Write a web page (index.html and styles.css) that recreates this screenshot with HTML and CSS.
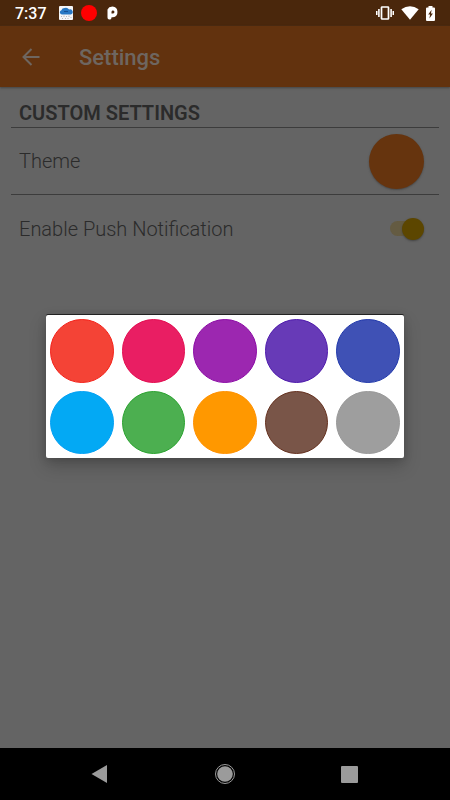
FILE: index.html
```html
<!DOCTYPE html>
<html lang="en">
<head>
<meta charset="utf-8">
<meta name="viewport" content="width=device-width, initial-scale=1">
<title>Settings</title>
<link rel="stylesheet" href="styles.css">
</head>
<body>
<div class="status">
  <span class="time">7:37</span>
  <svg class="weather" width="14" height="14" viewBox="0 0 14 14" aria-hidden="true">
    <rect width="14" height="14" rx="1" fill="#f5f6f8"/>
    <path d="M3 8.500a2.200 2.200 0 0 1-.6-4.300A3.300 3.300 0 0 1 5.500 2a4 4 0 0 1 4.600 1.500A2.600 2.600 0 0 1 12 8.500z" fill="#2878c4"/>
    <path d="M5 5.500h4" stroke="#154f94"/>
    <path d="M2.500 10v1M5 9.500v1.500M7.500 10v1M10 9.500v1.500M3.500 12v1M6.500 12v1M9 12v1M12 11v1" stroke="#aaa" stroke-width=".8"/>
  </svg>
  <span class="record"></span>
  <svg class="plogo" width="12" height="14" viewBox="0 0 12 14" aria-hidden="true">
    <path d="M.5 11.500V3.500L2.300 1.200 5.500.5a5.400 5.400 0 0 1 .5 10.700H4.500v.5a2 2 0 0 1-4-.2z" fill="#fff"/>
    <path d="M4.500 7.500V5.700a1.500 1.500 0 1 1 1.600 1.800z" fill="#4a270c"/>
  </svg>
  <span class="spacer"></span>
  <svg class="vibrate" width="18" height="14" viewBox="0 0 18 14" aria-hidden="true">
    <path d="M.7 5v4M2.900 3v8M15.100 3v8M17.300 5v4" stroke="#fff" stroke-width="1.600"/>
    <rect x="5.500" y="1" width="7" height="12" rx=".6" fill="none" stroke="#fff" stroke-width="1.700"/>
  </svg>
  <svg class="wifi" width="18" height="14" viewBox="0 0 18 14" aria-hidden="true">
    <path d="M.3 3.200Q9-2.600 17.700 3.200L9 13.700z" fill="#fff"/>
  </svg>
  <svg class="battery" width="9" height="15" viewBox="0 0 9 15" aria-hidden="true">
    <path d="M2.500 0h4v1.500H8q1 0 1 1V14q0 1-1 1H1q-1 0-1-1V2.500q0-1 1-1h1.500z" fill="#fff"/>
    <path d="M5.600 3.800L2.200 8.600h1.900L3.400 12.500 6.900 7.400H5z" fill="#4a270c"/>
  </svg>
</div>
<div class="app">
  <header class="bar">
    <button class="back" aria-label="Back">
      <svg width="18" height="18" viewBox="0 0 18 18" aria-hidden="true"><path d="M17.500 9H1.500M9.500 1L1.500 9l8 8" fill="none" stroke="#6e6660" stroke-width="2"/></svg>
    </button>
    <h1>Settings</h1>
  </header>
  <main class="settings">
    <h2>CUSTOM SETTINGS</h2>
    <div class="row">
      <span>Theme</span>
      <button class="theme" aria-label="Theme color"></button>
    </div>
    <div class="row">
      <label for="push">Enable Push Notification</label>
      <input class="switch" id="push" type="checkbox" role="switch" checked>
    </div>
  </main>
</div>
<div class="overlay">
  <div class="dialog" role="dialog" aria-label="Theme colors">
    <button class="swatch red" aria-label="Red"></button>
    <button class="swatch pink" aria-label="Pink"></button>
    <button class="swatch purple" aria-label="Purple"></button>
    <button class="swatch violet" aria-label="Deep purple"></button>
    <button class="swatch indigo" aria-label="Indigo"></button>
    <button class="swatch blue" aria-label="Light blue"></button>
    <button class="swatch green" aria-label="Green"></button>
    <button class="swatch orange" aria-label="Orange"></button>
    <button class="swatch brown" aria-label="Brown"></button>
    <button class="swatch gray" aria-label="Gray"></button>
  </div>
</div>
<nav class="nav">
  <button aria-label="Back"><svg width="22" height="22" viewBox="0 0 22 22" aria-hidden="true"><path d="M2.500 11L18 2v18z" fill="#9b9b9b"/></svg></button>
  <button aria-label="Home"><svg width="22" height="22" viewBox="0 0 22 22" aria-hidden="true"><circle cx="11" cy="11" r="9.500" fill="none" stroke="#9b9b9b"/><circle cx="11" cy="11" r="7.800" fill="#9b9b9b"/></svg></button>
  <button aria-label="Recent apps"><svg width="22" height="22" viewBox="0 0 22 22" aria-hidden="true"><rect x="3" y="3" width="17" height="17" rx="1" fill="#9b9b9b"/></svg></button>
</nav>
</body>
</html>
```
FILE: styles.css
```css
* { box-sizing: border-box; }

body {
  margin: 0;
  min-height: 100vh;
  display: flex;
  flex-direction: column;
  background: #646464;
  color: #2b2b2b;
  font-family: Roboto, "Liberation Sans", sans-serif;
  font-size: 20px;
}

button {
  padding: 0;
  border: 0;
  background: none;
}

svg { display: block; }

.status {
  height: 26px;
  display: flex;
  align-items: center;
  padding: 0 15px;
  background: #4a270c;
  color: #fff;
}
.time { font-size: 16px; font-weight: 500; line-height: 20px; padding-top: 2px; }
.weather { margin-left: 12px; }
.record {
  width: 16px;
  height: 16px;
  margin-left: 8px;
  border-radius: 50%;
  background: #f00;
}
.plogo { margin-left: 10px; }
.spacer { flex: 1; }
.wifi { margin-left: 7px; }
.battery { margin-left: 7px; }

.app { flex: 1; }

.bar {
  height: 61px;
  display: flex;
  align-items: center;
  padding-left: 22px;
  background: #62320e;
  box-shadow: 0 1px 2px #444;
}
.bar h1 {
  margin: 0 0 0 39px;
  padding-top: 2px;
  font-size: 22px;
  font-weight: 500;
  line-height: 26px;
  color: #6e6660;
}

.settings { padding: 11px; }
.settings h2 {
  margin: 0;
  padding: 3px 8px 2px;
  font-size: 20px;
  font-weight: 600;
  line-height: 24px;
  border-bottom: 1px solid #3c3c3c;
}
.row {
  height: 67px;
  display: flex;
  align-items: center;
  justify-content: space-between;
  padding: 0 15px 0 8px;
  font-weight: 300;
  border-bottom: 1px solid #3c3c3c;
}
.row:last-child { border-bottom: 0; }

.theme {
  width: 55px;
  height: 55px;
  border-radius: 50%;
  background: #66340e;
  box-shadow: 0 1px 2px #484848;
}

.switch {
  appearance: none;
  width: 34px;
  height: 22px;
  margin: 0;
  display: flex;
  align-items: center;
  position: relative;
}
.switch::before {
  content: "";
  width: 30px;
  height: 15px;
  border-radius: 8px;
  background: #645b42;
}
.switch::after {
  content: "";
  position: absolute;
  right: 0;
  width: 22px;
  height: 22px;
  border-radius: 50%;
  background: #5c4600;
  box-shadow: 0 1px 2px #444;
}

.overlay {
  position: absolute;
  inset: 25px 0 52px;
  display: flex;
  align-items: center;
  justify-content: center;
}
.dialog {
  width: calc(100% - 92px);
  display: grid;
  grid-template-columns: repeat(5, 1fr);
  gap: 8px;
  padding: 4px;
  border-radius: 2px;
  background: #fff;
  box-shadow: 0 -1px 0 #222, 0 8px 18px rgba(0, 0, 0, .2), 0 2px 8px rgba(0, 0, 0, .15);
}
.swatch {
  aspect-ratio: 1;
  border-radius: 50%;
  border: 1px solid;
}
.red { background: #f44336; border-color: #f42018; }
.pink { background: #e91e63; border-color: #e30d50; }
.purple { background: #9c27b0; border-color: #8b0aa5; }
.violet { background: #673ab7; border-color: #4e1aac; }
.indigo { background: #3f51b5; border-color: #2038ab; }
.blue { background: #03a9f4; border-color: #03a0f4; }
.green { background: #4caf50; border-color: #2ba330; }
.orange { background: #ff9800; border-color: #ff9100; }
.brown { background: #795548; border-color: #65311f; }
.gray { background: #9e9e9e; border-color: #999; }

.nav {
  height: 52px;
  display: flex;
  align-items: center;
  justify-content: space-between;
  padding: 0 90px 0 89px;
  background: #000;
}
```
